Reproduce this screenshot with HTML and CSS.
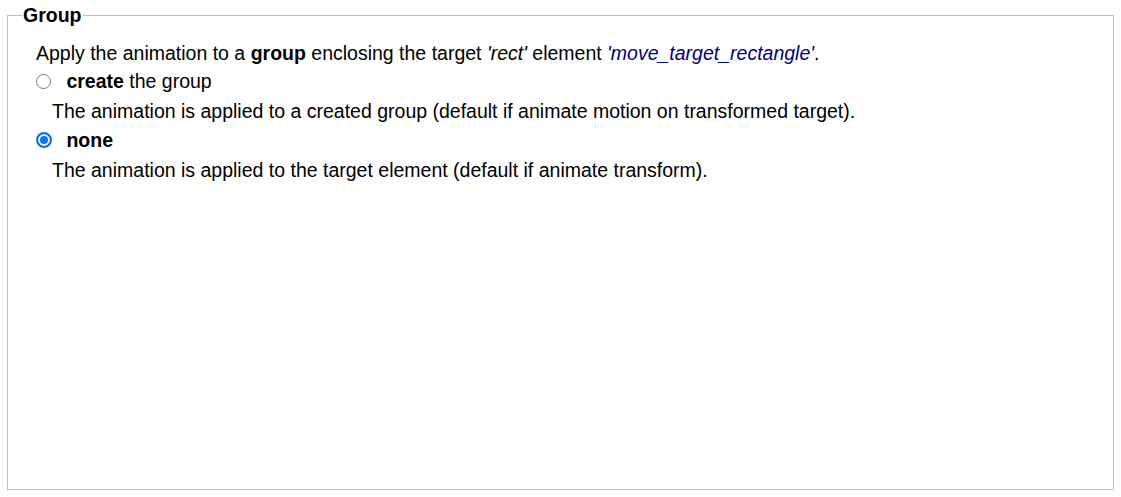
FILE: index.html
```html
<!DOCTYPE html>
<html>
<head>
    <meta charset="utf-8" />
    <title>Group</title>
    <link rel="stylesheet" href="styles.css">
</head>
<body>
    <fieldset class="group-box">
        <legend>Group</legend>
        <div class="intro">
            Apply the animation to a <b>group</b> enclosing the target <i>'rect'</i> element <i class="target-id">'move_target_rectangle'</i>.
        </div>
        <div class="option">
            <label><input type="radio" name="group" value="create" /> <b>create</b> the group</label>
            <div class="desc">The animation is applied to a created group (default if animate motion on transformed target).</div>
        </div>
        <div class="option">
            <label><input type="radio" name="group" value="none" checked /> <b>none</b></label>
            <div class="desc">The animation is applied to the target element (default if animate transform).</div>
        </div>
    </fieldset>
</body>
</html>
```

FILE: styles.css
```css
body {
    font-family: "Liberation Sans", Arial, sans-serif;
    font-size: 19.5px;
    color: #000;
    margin: 0;
    padding: 5px 7px 7px 7px;
}

.group-box {
    height: 485px;
    box-sizing: border-box;
    margin: 0;
    padding: 0 0 0 28px;
    border: 1px solid #c0c0c0;
}

.group-box legend {
    font-weight: bold;
    padding: 0 1px;
    margin-left: -14px;
    line-height: 21px;
}

.intro {
    line-height: 28px;
    margin-top: 13px;
}

.target-id {
    color: #000080;
}

.option label {
    display: block;
    line-height: 29px;
}

.option input {
    appearance: none;
    -webkit-appearance: none;
    box-sizing: border-box;
    width: 15px;
    height: 15px;
    margin: 0 10px 0 0;
    border: 1.5px solid #7a7a7a;
    border-radius: 50%;
    background: #fff;
    vertical-align: -1px;
}

.option input:checked {
    width: 16px;
    height: 16px;
    margin: 0 9px 0 0;
    border: 2.5px solid #0a74f0;
    background: #0a74f0;
    box-shadow: inset 0 0 0 2px #fff;
}

.desc {
    line-height: 30px;
    padding-left: 16px;
}
```
